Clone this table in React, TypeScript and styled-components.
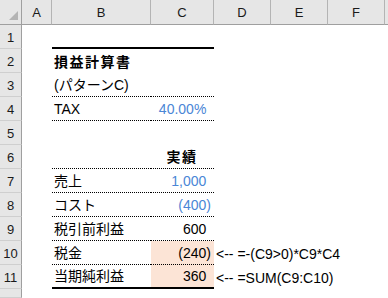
import React from "react";
import styled, { createGlobalStyle } from "styled-components";

const GlobalStyle = createGlobalStyle`
  html, body {
    margin: 0;
    padding: 0;
    background: #ffffff;
    overflow: hidden;
  }
  body {
    font-family: "Liberation Sans", "Noto Sans CJK JP", sans-serif;
  }
`;

type Line = "none" | "dotted" | "thick";

interface RowData {
  label?: string;
  value?: string;
  negative?: boolean;
  blue?: boolean;
  bold?: boolean;
  center?: boolean;
  fill?: boolean;
  line: Line;
  note?: string;
}

const COLUMNS = ["A", "B", "C", "D", "E", "F", ""];

const ROWS: RowData[] = [
  { line: "thick" },
  { label: "損益計算書", bold: true, line: "none" },
  { label: "(パターンC)", line: "dotted" },
  { label: "TAX", value: "40.00%", blue: true, line: "dotted" },
  { line: "none" },
  { value: "実績", bold: true, center: true, line: "dotted" },
  { label: "売上", value: "1,000", blue: true, line: "dotted" },
  { label: "コスト", value: "(400)", negative: true, blue: true, line: "dotted" },
  { label: "税引前利益", value: "600", line: "dotted" },
  { label: "税金", value: "(240)", negative: true, fill: true, line: "dotted", note: "<-- =-(C9>0)*C9*C4" },
  { label: "当期純利益", value: "360", fill: true, line: "thick", note: "<-- =SUM(C9:C10)" },
];

const Sheet = styled.div`
  display: grid;
  grid-template-columns: 22px 30px 99px 63px 57px 57px 57px 1fr;
  grid-template-rows: 25px repeat(11, 24px) 1fr;
  width: 388px;
  height: 298px;
  overflow: hidden;
  color: #000000;
`;

const Corner = styled.div`
  box-sizing: border-box;
  background: #e6e6e6;
  border-right: 1px solid #9f9f9f;
  border-bottom: 1px solid #9f9f9f;
  display: flex;
  justify-content: flex-end;
  align-items: flex-end;
  padding: 0 3px 4px 0;
`;

const ColHeader = styled.div`
  box-sizing: border-box;
  background: #e6e6e6;
  border-right: 1px solid #b4b4b4;
  border-bottom: 1px solid #9f9f9f;
  display: flex;
  align-items: center;
  justify-content: center;
  padding-top: 1px;
  font-size: 13px;
  color: #1a1a1a;
`;

const RowHeader = styled.div`
  box-sizing: border-box;
  background: #e6e6e6;
  border-right: 1px solid #9f9f9f;
  border-bottom: 1px solid #cfcfcf;
  display: flex;
  align-items: center;
  justify-content: center;
  padding-top: 2px;
  font-size: 13px;
  color: #1a1a1a;
`;

const Cell = styled.div<{ $line?: Line; $fill?: boolean; $align?: "left" | "right" | "center" }>`
  box-sizing: border-box;
  display: flex;
  align-items: flex-end;
  justify-content: ${p => (p.$align === "right" ? "flex-end" : p.$align === "center" ? "center" : "flex-start")};
  padding: 0 3px 3px 2px;
  background: ${p => (p.$fill ? "#fce4d6" : "transparent")};
  border-bottom: ${p =>
    p.$line === "dotted" ? "1px dotted #000" : p.$line === "thick" ? "2px solid #000" : "none"};
  font-size: 14px;
  line-height: 16px;
  white-space: nowrap;
  overflow: visible;
  min-width: 0;
`;

const Text = styled.span<{ $bold?: boolean; $blue?: boolean }>`
  font-weight: ${p => (p.$bold ? 700 : 400)};
  letter-spacing: ${p => (p.$bold ? "1.5px" : "0")};
  color: ${p => (p.$blue ? "#4a86d6" : "#000")};
`;

// keeps positives aligned with "(…)" negatives, like #,##0_)
const ParenPad = styled.span`
  visibility: hidden;
`;

const CornerMark = () => (
  <svg width="9" height="9" viewBox="0 0 9 9">
    <polygon points="9,0 9,9 0,9" fill="#b4b4b4" />
  </svg>
);

export default function App() {
  return (
    <>
      <GlobalStyle />
      <Sheet>
        <Corner>
          <CornerMark />
        </Corner>
        {COLUMNS.map((c, i) => (
          <ColHeader key={i}>{c}</ColHeader>
        ))}
        {ROWS.map((row, i) => (
          <React.Fragment key={i}>
            <RowHeader>{i + 1}</RowHeader>
            <Cell />
            <Cell $line={row.line}>
              {row.label && <Text $bold={row.bold}>{row.label}</Text>}
            </Cell>
            <Cell $line={row.line} $fill={row.fill} $align={row.center ? "center" : "right"}>
              {row.value && (
                <Text $bold={row.bold} $blue={row.blue}>
                  {row.value}
                  {!row.negative && !row.center && <ParenPad>)</ParenPad>}
                </Text>
              )}
            </Cell>
            <Cell>{row.note && <Text>{row.note}</Text>}</Cell>
            <Cell />
            <Cell />
            <Cell />
          </React.Fragment>
        ))}
        {/* row 12, only its top edge is in view */}
        <RowHeader />
      </Sheet>
    </>
  );
}
